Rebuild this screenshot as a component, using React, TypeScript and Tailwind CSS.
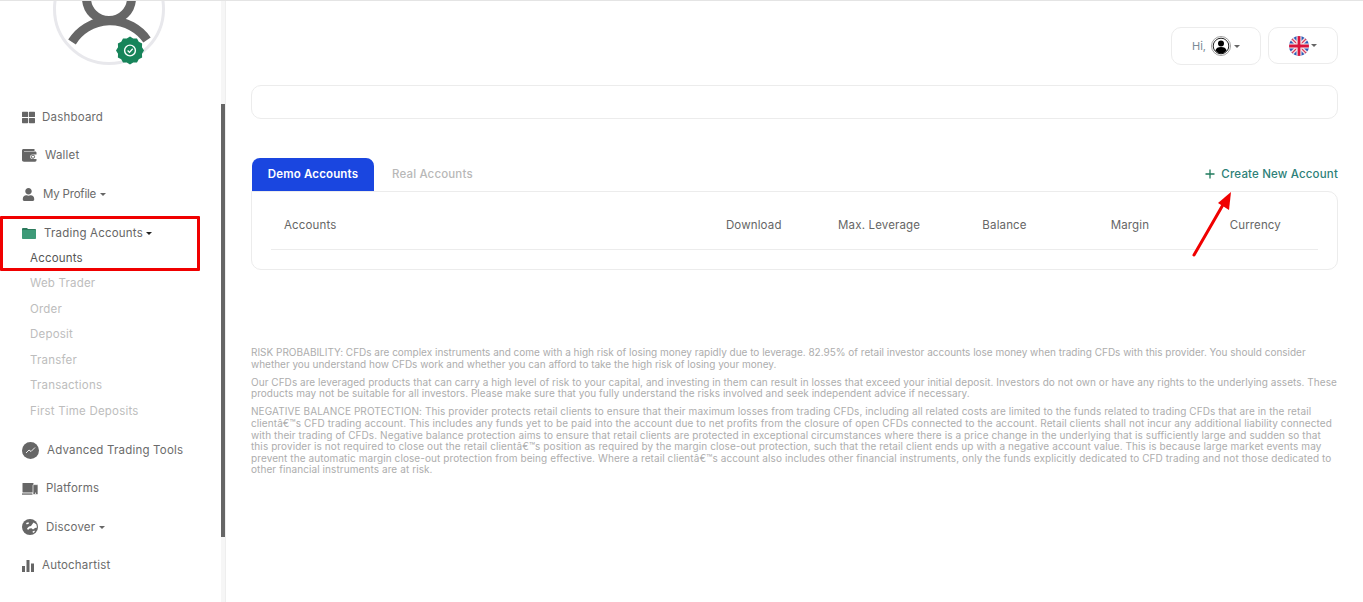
import type { ReactNode } from 'react';
import { FaThLarge, FaUser } from 'react-icons/fa';

const font = "font-['Inter','Open_Sans',sans-serif]";

function Caret({ className }: { className: string }) {
  return <span className={`inline-block border-x-[3px] border-t-[3px] border-x-transparent ${className}`} />;
}

function WalletIcon() {
  return (
    <svg width="15" height="13" viewBox="0 0 15 13" fill="#666">
      <path d="M1.5 0H12.5V2H2V2.6H13C14 2.6 14.5 3.2 14.5 4V5.5H10.5C9 5.5 8.2 6.5 8.2 7.7C8.2 9 9 10 10.5 10H14.5V11C14.5 12 14 12.7 13 12.7H2C.8 12.7 0 12 0 11V1.5C0 .6.6 0 1.5 0Z" />
      <circle cx="11" cy="7.7" r="1.6" fill="none" stroke="#666" strokeWidth="1" />
    </svg>
  );
}

function FolderIcon() {
  return (
    <svg width="14" height="11" viewBox="0 0 14 11">
      <path d="M0 1.2C0 .5.5 0 1.2 0H5L6 1H13C13.6 1 14 1.4 14 2V3H0Z" fill="#2c7a5c" />
      <rect x="0" y="2" width="14" height="9" rx="0.8" fill="#3d9a78" />
    </svg>
  );
}

function ChartCircle() {
  return (
    <svg width="17" height="17" viewBox="0 0 17 17">
      <circle cx="8.5" cy="8.5" r="8.5" fill="#666" />
      <path d="M4 11L7 8L9 9.5L13 5.5" fill="none" stroke="#fff" strokeWidth="0.9" />
    </svg>
  );
}

function DevicesIcon() {
  return (
    <svg width="16" height="12" viewBox="0 0 16 12" fill="#666">
      <rect x="0.5" y="0" width="11" height="9.5" rx="0.6" />
      <rect x="0" y="10.4" width="10.5" height="1.3" />
      <rect x="11" y="1.6" width="5" height="10" rx="0.8" stroke="#fff" strokeWidth="0.7" />
      <circle cx="13.5" cy="10.2" r="0.6" fill="#fff" />
    </svg>
  );
}

function GlobeIcon() {
  return (
    <svg width="16" height="16" viewBox="0 0 16 16">
      <circle cx="8" cy="8" r="8" fill="#666" />
      <path d="M5 9.5L7 7.5L9 7L11.5 3.6L14.3 5.2L15 8.5L13 9L11 10.5L9.5 9.2L7.5 9.6L6 11Z" fill="#fff" />
      <path d="M4 4L6.5 3.2L7 4.6L4.8 5.4Z" fill="#fff" />
      <path d="M10.5 12.5L12.5 11.5L12.8 12.8L11 14Z" fill="#fff" />
    </svg>
  );
}

function BarsIcon() {
  return (
    <svg width="12" height="12" viewBox="0 0 12 12" fill="#666">
      <rect x="0" y="6" width="3" height="6" />
      <rect x="4.5" y="0" width="3" height="12" />
      <rect x="9" y="3.5" width="3" height="8.5" />
    </svg>
  );
}

// scalloped edge of the verified badge, 12 lobes
const badgePoints = Array.from({ length: 24 }, (_, i) => {
  const r = i % 2 === 0 ? 14 : 12.4;
  const a = (i * Math.PI) / 12;
  return `${(83 + r * Math.sin(a)).toFixed(2)},${(49.5 - r * Math.cos(a)).toFixed(2)}`;
}).join(' ');

function AvatarArt() {
  return (
    <svg width="124" height="70" viewBox="0 0 124 70" className="ml-[47px]">
      <circle cx="62" cy="8" r="54.5" fill="none" stroke="#e8e8ec" strokeWidth="3" />
      <circle cx="62" cy="-3" r="22.5" fill="none" stroke="#666" strokeWidth="9" />
      <path d="M25 41A45 45 0 0 1 100 39" fill="none" stroke="#666" strokeWidth="9" />
      <polygon points={badgePoints} fill="#17845a" />
      <circle cx="83" cy="49.5" r="5.4" fill="none" stroke="#fff" strokeWidth="1.4" />
      <path d="M80.6 49.5L82.5 51.4L85.7 47.8" fill="none" stroke="#fff" strokeWidth="1.3" />
    </svg>
  );
}

function Flag() {
  return (
    <svg width="20" height="20" viewBox="0 0 20 20">
      <defs>
        <clipPath id="flag-clip">
          <circle cx="10" cy="10" r="10" />
        </clipPath>
      </defs>
      <g clipPath="url(#flag-clip)">
        <rect width="20" height="20" fill="#2a5cb8" />
        <path d="M0 0L20 20M20 0L0 20" stroke="#f2dfe2" strokeWidth="4" />
        <path d="M0 0L20 20M20 0L0 20" stroke="#d8355a" strokeWidth="1.2" />
        <path d="M10 0V20M0 10H20" stroke="#f5f0f0" strokeWidth="5" />
        <path d="M10 0V20M0 10H20" stroke="#d9143c" strokeWidth="2.8" />
      </g>
    </svg>
  );
}

function UserBadge() {
  return (
    <svg width="20" height="20" viewBox="0 0 20 20">
      <circle cx="10" cy="10" r="9.5" fill="#fff" stroke="#888" strokeWidth="0.8" />
      <circle cx="10" cy="10" r="7.8" fill="#fff" stroke="#222" strokeWidth="1" />
      <circle cx="10" cy="7.6" r="3" fill="#000" />
      <path d="M4.4 14.5C5 12 7 11 10 11C13 11 15 12 15.6 14.5C14 16.6 12 17.6 10 17.6C8 17.6 6 16.6 4.4 14.5Z" fill="#000" />
    </svg>
  );
}

function NavRow({ icon, label, gap, caret, tracking = 'tracking-[0.2px]' }: { icon: ReactNode; label: string; gap: string; caret?: boolean; tracking?: string }) {
  return (
    <div className={`flex h-[38.5px] items-center ${gap} ${tracking} text-[11.5px] text-[#6b6b6b]`}>
      <span className="flex items-center">{icon}</span>
      <span>{label}</span>
      {caret && <Caret className="-ml-[4px] border-t-[#666]" />}
    </div>
  );
}

const subItems = ['Accounts', 'Web Trader', 'Order', 'Deposit', 'Transfer', 'Transactions', 'First Time Deposits'];

const columns = ['Download', 'Max. Leverage', 'Balance', 'Margin', 'Currency'];

const disclaimer = [
  {
    tracking: 'tracking-[-0.01px]',
    lines: [
      'RISK PROBABILITY: CFDs are complex instruments and come with a high risk of losing money rapidly due to leverage. 82.95% of retail investor accounts lose money when trading CFDs with this provider. You should consider',
      'whether you understand how CFDs work and whether you can afford to take the high risk of losing your money.',
    ],
  },
  {
    tracking: 'tracking-[0.045px]',
    lines: [
      'Our CFDs are leveraged products that can carry a high level of risk to your capital, and investing in them can result in losses that exceed your initial deposit. Investors do not own or have any rights to the underlying assets. These',
      'products may not be suitable for all investors. Please make sure that you fully understand the risks involved and seek independent advice if necessary.',
    ],
  },
  {
    tracking: 'tracking-[0.09px]',
    lines: [
      'NEGATIVE BALANCE PROTECTION: This provider protects retail clients to ensure that their maximum losses from trading CFDs, including all related costs are limited to the funds related to trading CFDs that are in the retail',
      'clientâ€™s CFD trading account. This includes any funds yet to be paid into the account due to net profits from the closure of open CFDs connected to the account. Retail clients shall not incur any additional liability connected',
      'with their trading of CFDs. Negative balance protection aims to ensure that retail clients are protected in exceptional circumstances where there is a price change in the underlying that is sufficiently large and sudden so that',
      'this provider is not required to close out the retail clientâ€™s position as required by the margin close-out protection, such that the retail client ends up with a negative account value. This is because large market events may',
      'prevent the automatic margin close-out protection from being effective. Where a retail clientâ€™s account also includes other financial instruments, only the funds explicitly dedicated to CFD trading and not those dedicated to',
      'other financial instruments are at risk.',
    ],
  },
];

export default function App() {
  return (
    <div className={`relative flex h-[602px] w-[1363px] overflow-hidden border-t border-[#e4e4e4] bg-white ${font}`}>
      <aside className="relative h-full w-[226px] shrink-0 border-r border-[#eeeeee] pl-[22px]">
        <div className="-ml-[22px] h-[97px]">
          <AvatarArt />
        </div>
        <NavRow icon={<FaThLarge size={13} color="#666" />} label="Dashboard" gap="gap-[7px]" />
        <NavRow icon={<WalletIcon />} label="Wallet" gap="gap-[8px]" />
        <NavRow icon={<FaUser size={13} color="#666" />} label="My Profile" gap="gap-[8px]" caret tracking="tracking-[-0.2px]" />
        <div className="mt-[1px] flex h-[38px] items-center gap-[8px] text-[11.5px] tracking-[0.2px] text-[#666]">
          <FolderIcon />
          <span>Trading Accounts</span>
          <Caret className="-ml-[5px] border-t-[#222]" />
        </div>
        <div className="-mt-[7px] pl-[8px]">
          {subItems.map((item, i) => (
            <div key={item} className={`flex h-[25.5px] items-center text-[11.5px] tracking-[0.2px] ${i === 0 ? 'text-[#555]' : 'text-[#bdbdbd]'}`}>
              {item}
            </div>
          ))}
        </div>
        <div className="mt-[7px]">
          <NavRow icon={<ChartCircle />} label="Advanced Trading Tools" gap="gap-[8px]" />
          <NavRow icon={<DevicesIcon />} label="Platforms" gap="gap-[8px]" />
          <NavRow icon={<GlobeIcon />} label="Discover" gap="gap-[8px]" caret />
          <NavRow icon={<BarsIcon />} label="Autochartist" gap="gap-[8px]" />
        </div>
        <div className="absolute right-0 top-0 h-full w-[4px] bg-[#f6f6f6]">
          <div className="mt-[103px] h-[433px] w-full bg-[#666]" />
        </div>
      </aside>

      <main className="min-w-0 flex-1 pl-[25px] pr-[25px]">
        <div className="flex justify-end gap-[7px] pt-[26px]">
          <div className="flex h-[38px] w-[90px] items-center justify-center rounded-[10px] border border-[#ececec]">
            <span className="mr-[5px] text-[11px] text-[#7a8a96]">Hi,</span>
            <UserBadge />
            <Caret className="ml-[3px] border-t-[#666]" />
          </div>
          <div className="flex h-[37px] w-[70px] items-center justify-center rounded-[10px] border border-[#ececec]">
            <Flag />
            <Caret className="ml-[2px] border-t-[#666]" />
          </div>
        </div>

        <div className="mt-[20px] h-[34px] rounded-[10px] border border-[#ececec]" />

        <div className="mt-[39px] flex h-[33px] items-stretch">
          <div className="ml-[1px] flex w-[122px] items-center justify-center rounded-t-[8px] bg-[#1a46e0] text-[11.5px] font-semibold tracking-[0.15px] text-white">
            Demo Accounts
          </div>
          <div className="ml-[18px] flex items-center text-[11.5px] font-medium tracking-[0.15px] text-[#b8b8b8]">Real Accounts</div>
          <div className="ml-auto flex items-center gap-[6px] text-[11.5px] font-medium tracking-[0.17px] text-[#2d7f78]">
            <svg width="10" height="10" viewBox="0 0 10 10" className="-mt-[1px]">
              <path d="M5 .5V9.5M.5 5H9.5" stroke="#1f7a5c" strokeWidth="1.3" />
            </svg>
            <span>Create New Account</span>
          </div>
        </div>

        <div className="h-[79px] rounded-b-[10px] rounded-tr-[10px] border border-[#ececec] px-[19px]">
          <div className="grid h-[58px] grid-cols-[1fr_repeat(5,125.4px)] items-center border-b border-[#ececec] pt-[11px] text-[11.5px] tracking-[0.15px] text-[#666]">
            <div className="pl-[13px]">Accounts</div>
            {columns.map((c) => (
              <div key={c} className="text-center">
                {c}
              </div>
            ))}
          </div>
        </div>

        <div className="mt-[77px] whitespace-nowrap text-[10px] leading-[11.6px] text-[#adadad]">
          {disclaimer.map((block) => (
            <p key={block.lines[0]} className={`mb-[6.5px] ${block.tracking}`}>
              {block.lines.map((line) => (
                <span key={line} className="block">
                  {line}
                </span>
              ))}
            </p>
          ))}
        </div>
      </main>

      {/* annotation drawn over the screenshot */}
      <div className="pointer-events-none absolute left-0 top-[215px] h-[55px] w-[200px] rounded-[1px] border-[3px] border-[#f00000]" />
      <svg className="pointer-events-none absolute left-[1185px] top-[185px]" width="60" height="80" viewBox="0 0 60 80">
        <path d="M9 69L39 17" stroke="#f00000" strokeWidth="3" strokeLinecap="round" />
        <path d="M46 6L33 17L44 24Z" fill="#f00000" />
      </svg>
    </div>
  );
}
